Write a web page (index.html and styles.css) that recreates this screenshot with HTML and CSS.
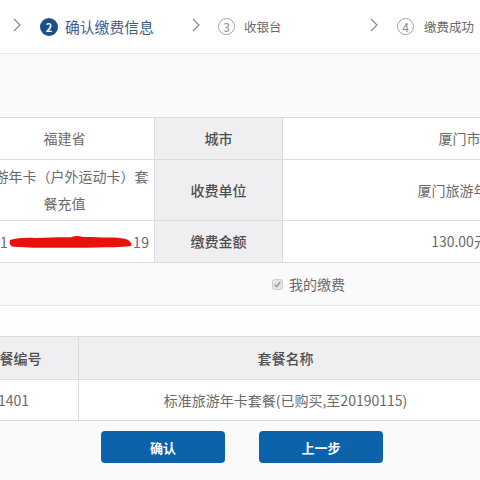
FILE: index.html
```html
<!DOCTYPE html>
<html lang="zh-CN">
<head>
<meta charset="utf-8">
<title>确认缴费信息</title>
<link rel="stylesheet" href="styles.css">
</head>
<body>
<div class="page">
  <div class="steps">
    <svg class="chev" width="8" height="14" viewBox="0 0 8 14"><path d="M1 1 L7 7 L1 13" fill="none" stroke="#8a8a8a" stroke-width="1.2"/></svg>
    <span class="num num-active">2</span>
    <span class="label label-active label-first">确认缴费信息</span>
    <svg class="chev chev-b" width="8" height="14" viewBox="0 0 8 14"><path d="M1 1 L7 7 L1 13" fill="none" stroke="#8a8a8a" stroke-width="1.2"/></svg>
    <span class="num num-b">3</span>
    <span class="label label-second">收银台</span>
    <svg class="chev" width="8" height="14" viewBox="0 0 8 14"><path d="M1 1 L7 7 L1 13" fill="none" stroke="#8a8a8a" stroke-width="1.2"/></svg>
    <span class="num num-c">4</span>
    <span class="label">缴费成功</span>
  </div>

  <div class="band"></div>

  <div class="info">
    <div class="cell val">福建省</div>
    <div class="cell key">城市</div>
    <div class="cell val">厦门市</div>

    <div class="cell val">旅游年卡（户外运动卡）套<br>餐充值</div>
    <div class="cell key">收费单位</div>
    <div class="cell val">厦门旅游年卡</div>

    <div class="cell val val-id">1<svg class="scribble" width="124" height="14" viewBox="0 0 124 14"><path d="M1 5 C8 3 16 2.5 26 3 C40 2.5 52 2 62 2.2 C66 0.5 70 0.8 74 2 C84 1.5 92 3 100 2.5 C108 2.5 114 3 118 4.5 C121 6 123 8 122 11 C112 12.5 100 12 88 12.5 C70 13 50 12.5 32 12.8 C20 12.8 10 12 3 11.5 C0.5 10 0.5 7 1 5 Z" fill="#e8120c"/></svg>19</div>
    <div class="cell key">缴费金额</div>
    <div class="cell val">130.00元</div>
  </div>

  <div class="opts">
    <svg class="check" width="11" height="11" viewBox="0 0 11 11"><rect x="0.5" y="0.5" width="10" height="10" rx="2" fill="#e4e4e6" stroke="#cdcdcf"/><path d="M2.8 5.6 L4.6 7.6 L8.2 3.2" fill="none" stroke="#8d8d90" stroke-width="1.3"/></svg>
    <span class="opt-text">我的缴费</span>
  </div>

  <div class="gap"></div>

  <div class="plans">
    <div class="pcell phead">套餐编号</div>
    <div class="pcell phead">套餐名称</div>
    <div class="pcell pbody">1401</div>
    <div class="pcell pbody">标准旅游年卡套餐(已购买,至20190115)</div>
  </div>

  <div class="actions">
    <button class="btn">确认</button>
    <button class="btn">上一步</button>
  </div>
</div>
</body>
</html>
```

FILE: styles.css
```css
html, body {
  margin: 0;
  padding: 0;
  overflow: hidden;
  background: #fafafb;
}

body {
  font-family: "Noto Sans CJK SC", "Noto Sans", sans-serif;
  color: #666;
  width: 480px;
  height: 480px;
}

.page {
  width: 480px;
}

.steps {
  height: 53px;
  background: #fff;
  border-bottom: 1px solid #e4e4e6;
  display: flex;
  align-items: center;
  padding-left: 13px;
  box-sizing: content-box;
}

.chev {
  flex: none;
  width: 8px;
  height: 14px;
  margin-right: 19px;
  margin-top: -3px;
}

.chev-b {
  margin-right: 18px;
}

.num {
  flex: none;
  width: 17px;
  height: 17px;
  border-radius: 50%;
  box-sizing: border-box;
  border: 1px solid #a2a2a2;
  color: #8a8a8a;
  font-size: 12px;
  line-height: 15px;
  text-align: center;
  margin-right: 9px;
}

.num-active {
  width: 18px;
  height: 18px;
  border: none;
  background: #1b4f8c;
  color: #fff;
  font-weight: 700;
  font-size: 11px;
  line-height: 18px;
  margin-right: 7px;
}

.num-c {
  margin-right: 10px;
}

.label {
  flex: none;
  font-size: 12.5px;
  color: #6a6a6a;
}

.label-active {
  font-size: 14.8px;
  color: #3d5f88;
}

.label-first {
  width: 127px;
}

.label-second {
  width: 126px;
}

.band {
  height: 63px;
}

.info {
  margin-left: -25px;
  display: grid;
  grid-template-columns: 180px 128px 354px;
  grid-template-rows: 42px 61px 42px;
  border-top: 1px solid #dcdcde;
  width: 662px;
}

.cell {
  box-sizing: border-box;
  border-right: 1px solid #dcdcde;
  border-bottom: 1px solid #dcdcde;
  display: flex;
  align-items: center;
  justify-content: center;
  text-align: center;
  font-size: 14px;
  line-height: 27px;
  background: #fff;
  color: #6a6a6a;
  white-space: nowrap;
}

.key {
  background: #efeff1;
  color: #4e4e4e;
  font-weight: 500;
}

.val-id {
  justify-content: flex-start;
  padding-left: 25px;
  padding-top: 2px;
  letter-spacing: 0.3px;
}

.scribble {
  display: block;
  margin: 0 0 1px 1px;
}

.opts {
  height: 42px;
  border-bottom: 1px solid #e4e4e6;
  display: flex;
  align-items: center;
  padding-left: 272px;
}

.check {
  flex: none;
  margin-right: 6px;
}

.opt-text {
  font-size: 14px;
  color: #6a6a6a;
}

.gap {
  height: 30px;
  background: #fdfdfd;
}

.plans {
  margin-left: -51px;
  display: grid;
  grid-template-columns: 130px 414px;
  grid-template-rows: 43px 41px;
  border-top: 1px solid #dcdcde;
  width: 544px;
}

.pcell {
  box-sizing: border-box;
  border-right: 1px solid #dcdcde;
  border-bottom: 1px solid #dcdcde;
  display: flex;
  align-items: center;
  justify-content: center;
  font-size: 14px;
  white-space: nowrap;
}

.phead {
  background: #efeef0;
  color: #4e4e4e;
  font-weight: 500;
}

.pbody {
  background: #fff;
  color: #6a6a6a;
}

.actions {
  display: flex;
  gap: 34px;
  padding-left: 101px;
  margin-top: 10px;
}

.btn {
  width: 124px;
  height: 32px;
  border: none;
  border-radius: 4px;
  background: #0d63ab;
  color: #fff;
  font-family: "Noto Sans CJK SC", sans-serif;
  font-size: 13px;
  font-weight: 700;
  padding: 0;
}
```
